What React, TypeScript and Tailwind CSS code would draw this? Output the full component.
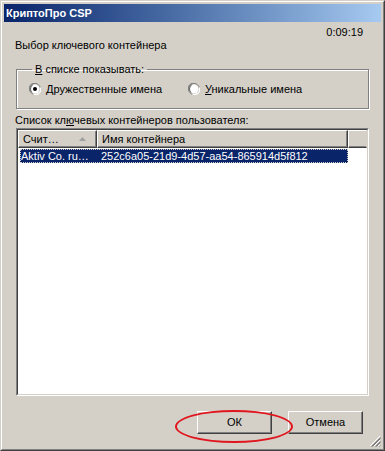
import React from "react";

function Radio({ checked }: { checked?: boolean }) {
  return (
    <svg width="12" height="12" viewBox="0 0 12 12" className="shrink-0">
      <circle cx="6" cy="6" r="5.5" fill="none" stroke="#808080" />
      <path d="M0.6 7.5A5.5 5.5 0 0 1 7.5 0.6" fill="none" stroke="#808080" strokeWidth="1.2" />
      <path d="M11.4 4.5A5.5 5.5 0 0 1 4.5 11.4" fill="none" stroke="#ffffff" strokeWidth="1.2" />
      <circle cx="6" cy="6" r="4.5" fill="#ffffff" stroke="#404040" strokeWidth="0.8" strokeDasharray="8 20" strokeDashoffset="-10" />
      {checked && <circle cx="6" cy="6" r="2" fill="#000" />}
    </svg>
  );
}

export default function App() {
  const font = { fontFamily: '"Liberation Sans", Arial, sans-serif' };
  return (
    <div
      className="relative w-[385px] h-[451px] bg-[#d4d0c8] text-[11px] text-black border border-t-[#d4d0c8] border-l-[#d4d0c8] border-r-[#404040] border-b-[#404040] overflow-hidden"
      style={font}
    >
      <div className="h-full w-full border border-t-white border-l-white border-r-[#808080] border-b-[#808080] p-[2px] flex flex-col">
        {/* title bar */}
        <div className="h-[18px] shrink-0 flex items-center pl-[2px] bg-gradient-to-r from-[#0a246a] to-[#a6caf0] text-white font-bold text-[11px]">
          КриптоПро CSP
        </div>
        {/* timer */}
        <div className="flex justify-end pr-[18px] mt-[4px] h-[13px] leading-[13px]">0:09:19</div>
        <div className="pl-[11px] mt-[0px] h-[13px] leading-[13px]">Выбор ключевого контейнера</div>

        {/* group box */}
        <fieldset className="mx-[12px] mt-[11px] h-[46px] shrink-0 border border-[#808080] shadow-[inset_1px_1px_0_#fff,1px_1px_0_#fff] px-[12px] pb-[4px]">
          <legend className="ml-[3px] px-[3px] leading-[13px] h-[13px]">
            <span className="underline">В</span> списке показывать:
          </legend>
          <div className="flex items-center mt-[6px] h-[14px]">
            <div className="flex items-center gap-[5px] w-[159px]">
              <Radio checked />
              <span>
                <span className="underline">Д</span>ружественные имена
              </span>
            </div>
            <div className="flex items-center gap-[5px]">
              <Radio />
              <span>
                <span className="underline">У</span>никальные имена
              </span>
            </div>
          </div>
        </fieldset>

        <div className="pl-[11px] mt-[5px] h-[13px] leading-[13px]">
          Список кл<span className="underline">ю</span>чевых контейнеров пользователя:
        </div>

        {/* list */}
        <div className="mx-[12px] mt-[1px] h-[268px] shrink-0 border border-t-[#808080] border-l-[#808080] border-r-white border-b-white">
          <div className="h-full border border-t-[#404040] border-l-[#404040] border-r-[#d4d0c8] border-b-[#d4d0c8] bg-white flex flex-col">
            <div className="flex h-[18px] shrink-0">
              <div className="w-[79px] flex items-center justify-between pl-[4px] pr-[10px] bg-[#d4d0c8] border border-t-white border-l-white border-r-[#404040] border-b-[#404040] shadow-[inset_-1px_-1px_0_#808080]">
                <span>Счит…</span>
                <svg width="7" height="4" viewBox="0 0 7 4">
                  <path d="M3.5 0L7 4H0Z" fill="#a0a0a0" />
                </svg>
              </div>
              <div className="w-[251px] flex items-center pl-[4px] bg-[#d4d0c8] border border-t-white border-l-white border-r-[#404040] border-b-[#404040] shadow-[inset_-1px_-1px_0_#808080]">
                Имя контейнера
              </div>
              <div className="flex-1 bg-[#d4d0c8] border border-t-white border-l-white border-r-[#d4d0c8] border-b-[#404040] shadow-[inset_0_-1px_0_#808080]" />
            </div>
            <div className="flex h-[14px] mt-[1px] ml-[2px]">
              <div className="w-[328px] flex items-center bg-[#0a246a] text-white outline outline-1 outline-dotted outline-[#d4d0c8] -outline-offset-1">
                <span className="w-[79px] pl-[1px] whitespace-nowrap overflow-hidden">Aktiv Co. ru…</span>
                <span className="pl-[2px]">252c6a05-21d9-4d57-aa54-865914d5f812</span>
              </div>
            </div>
          </div>
        </div>

        {/* buttons */}
        <div className="flex justify-end gap-[16px] mt-[15px] pr-[18px]">
          <button className="w-[75px] h-[23px] bg-[#d4d0c8] border border-t-white border-l-white border-r-[#404040] border-b-[#404040] shadow-[inset_-1px_-1px_0_#808080]">
            ОК
          </button>
          <button className="w-[75px] h-[23px] bg-[#d4d0c8] border border-t-white border-l-white border-r-[#404040] border-b-[#404040] shadow-[inset_-1px_-1px_0_#808080]">
            Отмена
          </button>
        </div>
      </div>

      {/* red annotation ellipse */}
      <div className="absolute left-[174px] top-[409px] w-[118px] h-[33px] rounded-[50%] border-[2px] border-[#e0161e]" />

      {/* size grip */}
      <svg className="absolute right-[3px] bottom-[3px]" width="12" height="12" viewBox="0 0 12 12">
        <path d="M11 1L1 11M11 5L5 11M11 9L9 11" stroke="#ffffff" strokeWidth="1" />
        <path d="M11.5 2.5L2.5 11.5M11.5 3.5L3.5 11.5M11.5 6.5L6.5 11.5M11.5 7.5L7.5 11.5M11.5 10.5L10.5 11.5" stroke="#808080" strokeWidth="1" />
      </svg>
    </div>
  );
}
